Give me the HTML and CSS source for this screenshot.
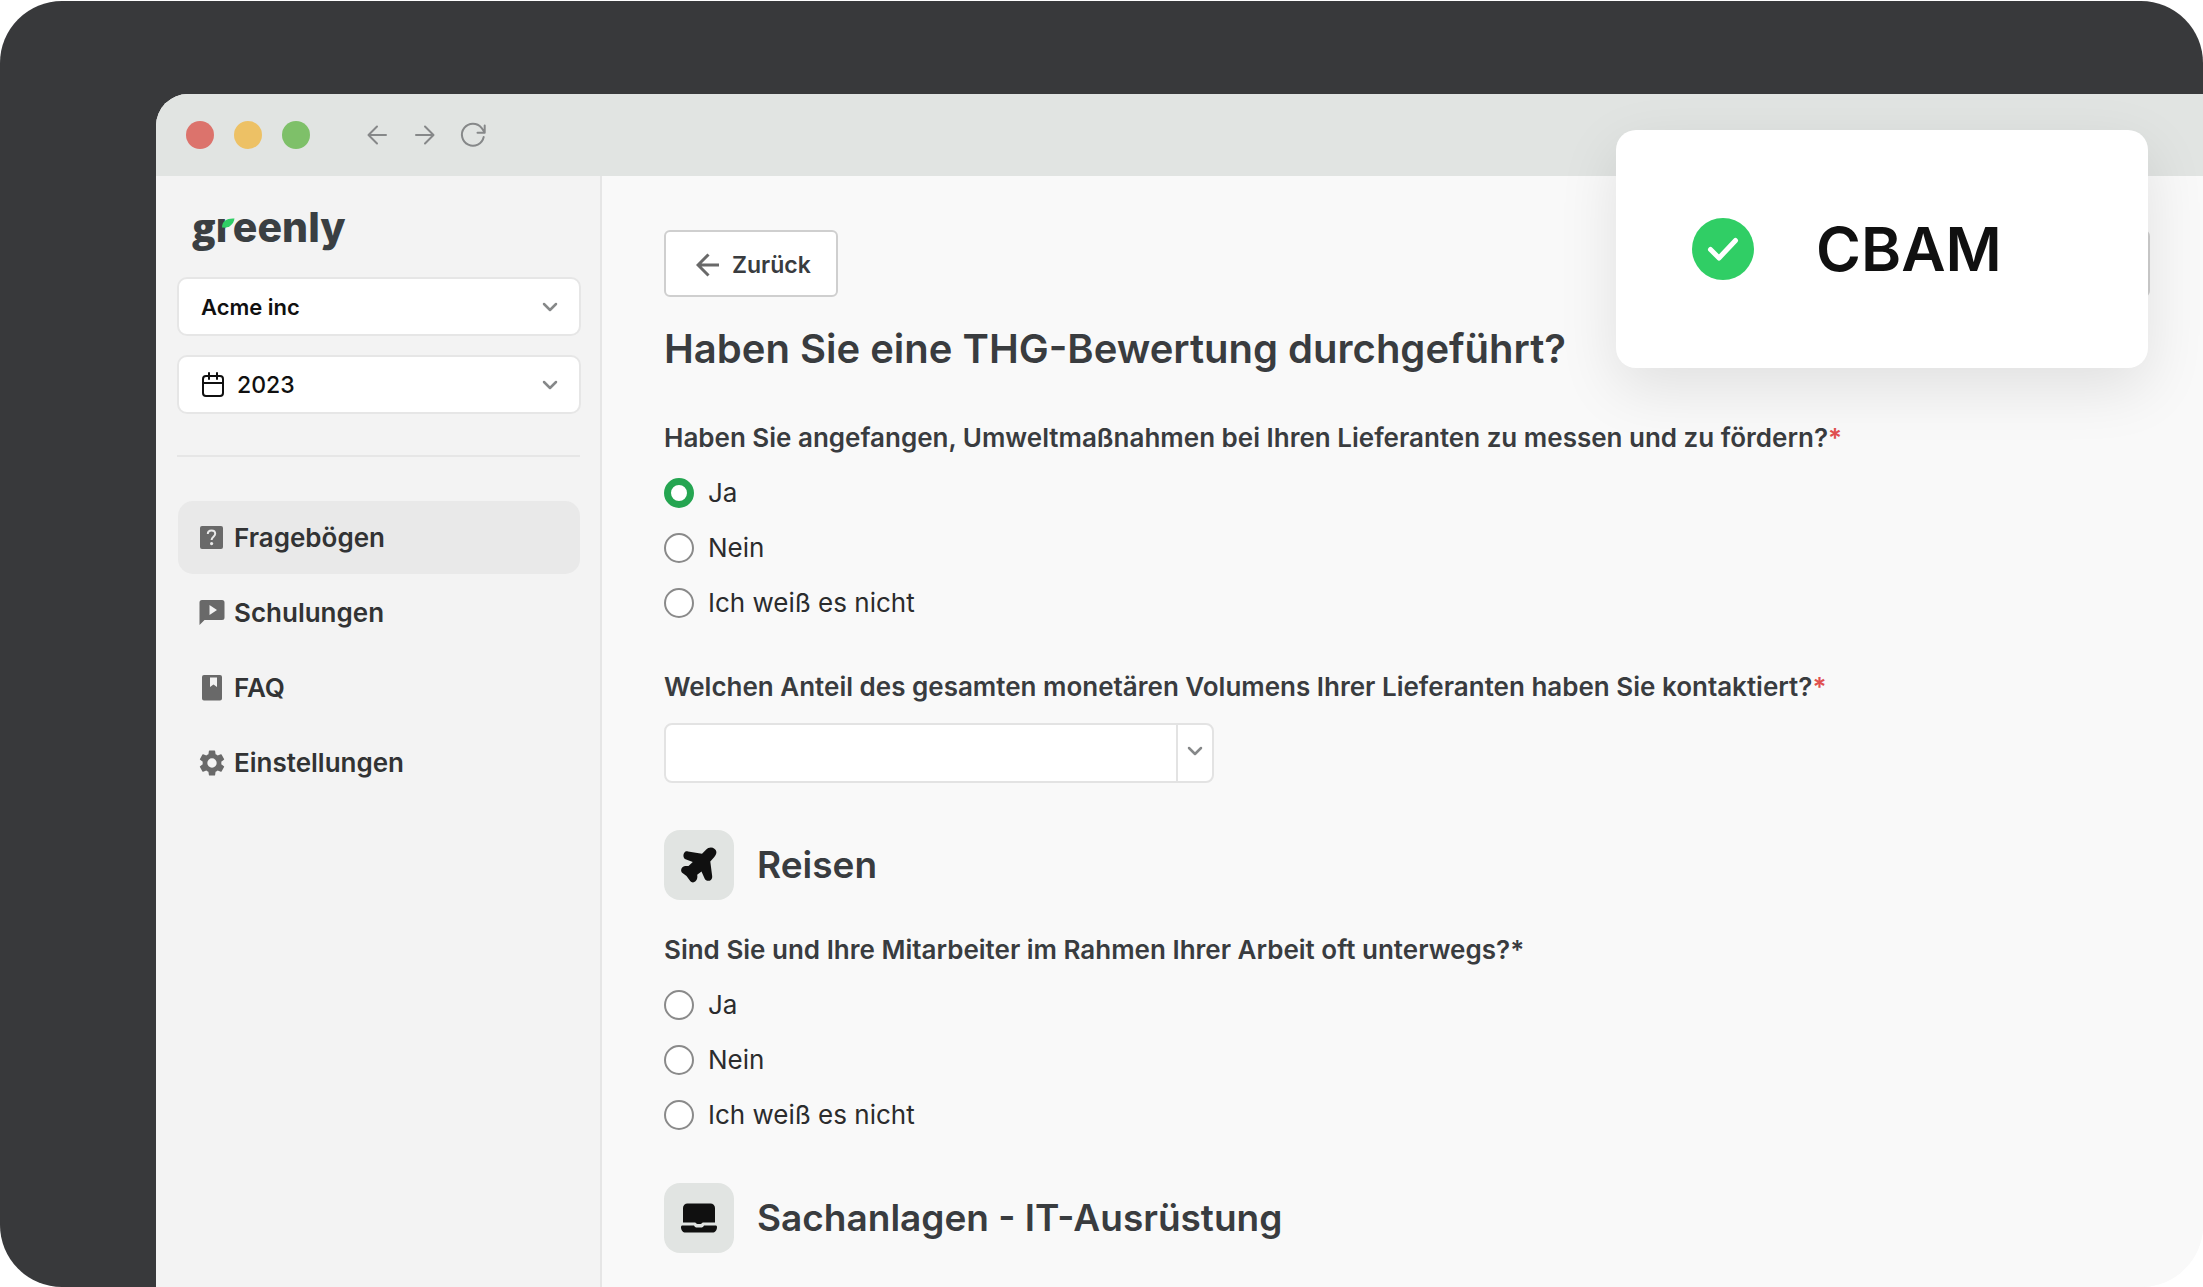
FILE: index.html
```html
<!DOCTYPE html>
<html lang="de">
<head>
<meta charset="utf-8">
<meta name="viewport" content="width=device-width, initial-scale=1">
<title>Greenly – Fragebögen</title>
<link rel="stylesheet" href="styles.css">
</head>
<body>
<div class="stage">
  <div class="window">
    <header class="titlebar">
      <div class="lights">
        <span class="light light-red"></span>
        <span class="light light-yellow"></span>
        <span class="light light-green"></span>
      </div>
      <div class="browser-nav">
        <button class="nav-button" type="button" aria-label="Seite zurück">
          <svg viewBox="0 0 28 28" width="28" height="28"><path d="M23 14H6M14 5.500L5.500 14l8.500 8.500"/></svg>
        </button>
        <button class="nav-button" type="button" aria-label="Seite vor">
          <svg viewBox="0 0 28 28" width="28" height="28"><path d="M5 14h17M14 5.500l8.500 8.500L14 22.500"/></svg>
        </button>
        <button class="nav-button" type="button" aria-label="Neu laden">
          <svg viewBox="0 0 28 28" width="28" height="28"><path d="M24.700 16A11 11 0 1 1 22.500 6.800L25 10.500M25.700 4.500v7.200h-7.200"/></svg>
        </button>
      </div>
    </header>

    <div class="body">
      <aside class="sidebar">
        <a class="logo" href="#" aria-label="greenly"><span class="logo-g">g</span><span class="logo-r"><span class="logo-stem">r</span><svg class="leaf" viewBox="0 0 13 10" width="13" height="10"><path d="M0 9.500C0 3 5 0 12.500.500 11.500 6.500 7 10.500 0 9.500z"/></svg></span>eenly</a>

        <div class="pickers">
          <div class="picker">
            <select class="picker-select picker-company" aria-label="Unternehmen"><option>Acme inc</option></select>
            <svg class="chevron" viewBox="0 0 16 10" width="16" height="10"><path d="M2 2l6 6 6-6"/></svg>
          </div>
          <div class="picker">
            <svg class="calendar" viewBox="0 0 24 26" width="24" height="26"><rect x="2" y="4" width="20" height="20" rx="3"/><path d="M2 11h20M8 1v6M16 1v6"/></svg>
            <select class="picker-select picker-year" aria-label="Jahr"><option>2023</option></select>
            <svg class="chevron" viewBox="0 0 16 10" width="16" height="10"><path d="M2 2l6 6 6-6"/></svg>
          </div>
        </div>

        <nav class="menu">
          <a class="menu-item menu-item-active" href="#">
            <svg viewBox="0 0 26 26" width="26" height="26"><rect x="1" y="1" width="23" height="23" rx="2"/><path class="question" d="M8.800 9c0-2.200 1.600-3.600 3.700-3.600s3.700 1.400 3.700 3.400c0 2.800-3.600 3-3.600 6.200"/><circle class="question-dot" cx="12.600" cy="18.600" r="1.600"/></svg>
            Fragebögen
          </a>
          <a class="menu-item" href="#">
            <svg viewBox="0 0 26 26" width="26" height="26"><path fill-rule="evenodd" d="M3 0h20a2.500 2.500 0 0 1 2.500 2.500v15A2.500 2.500 0 0 1 23 20H5.500L.500 25V2.500A2.500 2.500 0 0 1 3 0zM10.500 5v10l7.500-5z"/></svg>
            Schulungen
          </a>
          <a class="menu-item" href="#">
            <svg viewBox="0 0 26 26" width="26" height="26"><path fill-rule="evenodd" d="M5 0h16a2 2 0 0 1 2 2v21.500a2 2 0 0 1-2 2H5a2 2 0 0 1-2-2V2a2 2 0 0 1 2-2zM11 2.500V12l3.500-2.500L18 12V2.500z"/></svg>
            FAQ
          </a>
          <a class="menu-item" href="#">
            <svg viewBox="2 2 20 20" width="26" height="26"><path d="M19.140 12.940c.04-.3.060-.610.060-.940s-.020-.640-.070-.940l2.030-1.580a.49.49 0 0 0 .12-.61l-1.920-3.320a.49.49 0 0 0-.59-.22l-2.390.96a7 7 0 0 0-1.620-.94l-.36-2.540A.48.48 0 0 0 13.920 2.400h-3.840a.48.48 0 0 0-.47.41l-.36 2.540c-.59.240-1.130.570-1.620.940l-2.390-.96a.49.49 0 0 0-.59.22L2.740 8.870a.49.49 0 0 0 .12.61l2.030 1.580c-.05.300-.09.630-.09.940s.02.640.07.940l-2.030 1.580a.49.49 0 0 0-.12.610l1.920 3.320c.12.220.37.290.59.220l2.390-.96c.5.380 1.030.700 1.620.940l.36 2.540c.05.240.24.410.48.410h3.840c.24 0 .44-.17.470-.41l.36-2.540a7 7 0 0 0 1.620-.94l2.390.96c.22.080.47 0 .59-.22l1.920-3.320a.49.49 0 0 0-.12-.61zM12 15.600a3.600 3.600 0 1 1 0-7.200 3.600 3.600 0 0 1 0 7.200z"/></svg>
            Einstellungen
          </a>
        </nav>
      </aside>

      <main class="content">
        <button class="back" type="button">
          <svg viewBox="0 0 24 24" width="24" height="24"><path d="M23 12H2.500M12.500 1.500L2 12l10.500 10.500"/></svg>
          Zurück
        </button>
        <h1 class="title">Haben Sie eine THG-Bewertung durchgeführt?</h1>

        <fieldset class="question-group">
          <legend class="label">Haben Sie angefangen, Umweltmaßnahmen bei Ihren Lieferanten zu messen und zu fördern?<span class="required">*</span></legend>
          <label class="choice"><input class="radio" type="radio" name="suppliers" checked>Ja</label>
          <label class="choice"><input class="radio" type="radio" name="suppliers">Nein</label>
          <label class="choice"><input class="radio" type="radio" name="suppliers">Ich weiß es nicht</label>
        </fieldset>

        <div class="share">
          <label class="label" for="share">Welchen Anteil des gesamten monetären Volumens Ihrer Lieferanten haben Sie kontaktiert?<span class="required">*</span></label>
          <div class="share-field">
            <select class="share-select" id="share"><option></option></select>
            <span class="share-toggle"><svg class="chevron" viewBox="0 0 16 10" width="16" height="10"><path d="M2 2l6 6 6-6"/></svg></span>
          </div>
        </div>

        <h2 class="section">
          <span class="section-icon"><svg viewBox="0 0 36 36" width="36" height="36"><path d="M3.300 5.700C4.200 4.500 5.400 4.100 7 4.400l14 2.300 4-4C27.500.200 31-.200 33.700 1.900s1.900 5.800-.6 8.300l-3.800 4.300 1.800 14c.3 2-.1 3.400-1.200 4.400-1.900 1.700-5.500 1-6.300-1.500L20.500 24.500l-4.300 3.300c.5 2.700-.100 5-1.700 6.500-1.600 1.600-4 1.500-5.500-.5L5.500 29 1.500 26C-.300 24.500-.300 22.100 1.200 20.500c1.500-1.500 3.700-1.700 6.300-1.400L11.800 15 4.500 12.300C2.200 11.400 1.800 7.500 3.300 5.700z"/></svg></span>
          Reisen
        </h2>

        <fieldset class="question-group question-group-travel">
          <legend class="label">Sind Sie und Ihre Mitarbeiter im Rahmen Ihrer Arbeit oft unterwegs?*</legend>
          <label class="choice"><input class="radio" type="radio" name="travel">Ja</label>
          <label class="choice"><input class="radio" type="radio" name="travel">Nein</label>
          <label class="choice"><input class="radio" type="radio" name="travel">Ich weiß es nicht</label>
        </fieldset>

        <h2 class="section section-equipment">
          <span class="section-icon"><svg viewBox="0 0 36 30" width="36" height="30"><path d="M6.500.500h23a4.500 4.500 0 0 1 4.500 4.500v14.500H22c-1 0-1.200 1.500-2.500 1.500h-3c-1.300 0-1.500-1.500-2.500-1.500H2V5A4.500 4.500 0 0 1 6.500.500z"/><path d="M1.500 22.500H13c.8 1.500 1.500 2 3 2h4c1.500 0 2.200-.5 3-2h11.500c1 0 1.500.700 1.500 1.500 0 3.500-2 5.500-4.500 5.500h-27C2 29.500 0 27.500 0 24c0-.8.500-1.500 1.500-1.500z"/></svg></span>
          Sachanlagen - IT-Ausrüstung
        </h2>
      </main>
    </div>
  </div>

  <div class="behind-card"></div>
  <section class="card">
    <svg class="check" viewBox="0 0 62 62" width="62" height="62"><circle cx="31" cy="31" r="31"/><path d="M18.500 31.500l8.500 8.500L43.500 22.500"/></svg>
    CBAM
  </section>
</div>
</body>
</html>
```

FILE: styles.css
```css
* {
  box-sizing: border-box;
}

body {
  margin: 0;
  padding-top: 1px;
  background: #fff;
  font-family: Inter, "Liberation Sans", sans-serif;
  color: #393c3f;
}

svg {
  display: block;
  flex: none;
}

a {
  color: inherit;
  text-decoration: none;
}

/* The lower right quarter is light, so no dark edge shows round that corner */
.stage {
  position: relative;
  display: flex;
  min-height: calc(100vh - 1px);
  padding: 93px 0 0 156px;
  background:
    linear-gradient(#38393b, #38393b) 0 0 / 50% 100% no-repeat,
    linear-gradient(#38393b 50%, #f9f9f9 50%);
  border-radius: 62px;
  overflow: hidden;
}

.window {
  display: flex;
  flex: 1;
  flex-direction: column;
  background: #f9f9f9;
  border-radius: 32px 0 0 0;
  overflow: hidden;
}

/* Browser chrome */

.titlebar {
  display: flex;
  align-items: center;
  gap: 53px;
  height: 82px;
  padding-left: 30px;
  background: #e1e4e2;
}

.lights,
.browser-nav {
  display: flex;
  gap: 20px;
}

.light {
  width: 28px;
  height: 28px;
  border-radius: 50%;
}

.light-red {
  background: #dc736c;
}

.light-yellow {
  background: #edc165;
}

.light-green {
  background: #7ec069;
}

.nav-button {
  padding: 0;
  background: none;
  border: 0;
}

.nav-button path {
  fill: none;
  stroke: #868889;
  stroke-width: 2;
  stroke-linecap: round;
  stroke-linejoin: round;
}

.body {
  display: flex;
  flex: 1;
}

/* Sidebar */

.sidebar {
  flex: none;
  width: 446px;
  padding: 27px 19px 0 21px;
  background: #f3f3f3;
  border-right: 2px solid #e6e6e6;
}

.logo {
  display: flex;
  width: max-content;
  margin-left: 15px;
  font-size: 41px;
  font-weight: 800;
  line-height: 48px;
  color: #3a3f42;
}

.logo-g {
  font-family: "Open Sans", sans-serif;
  font-size: 39px;
}

.logo-r {
  position: relative;
}

/* Only the stem of the letter shows; the leaf stands in for its arm */
.logo-stem {
  display: block;
  clip-path: inset(0 7px 0 0);
}

.leaf {
  position: absolute;
  top: 15px;
  right: -2px;
  fill: #30ce65;
}

.pickers {
  display: grid;
  gap: 19px;
  margin-right: 1px;
  padding: 26px 0 41px;
  border-bottom: 2px solid #e6e6e6;
}

.picker {
  display: flex;
  align-items: center;
  height: 59px;
  margin-right: -1px;
  padding: 0 21px 0 22px;
  background: #fff;
  border: 2px solid #e6e6e6;
  border-radius: 10px;
}

.picker-select {
  flex: 1;
  padding: 0;
  appearance: none;
  background: none;
  border: 0;
  font: 500 23px/32px Inter, sans-serif;
  color: #101010;
}

.picker-company {
  font-size: 22px;
  font-weight: 600;
}

.picker-year {
  padding-left: 12px;
}

.chevron path {
  fill: none;
  stroke: #868889;
  stroke-width: 2.5;
  stroke-linecap: round;
  stroke-linejoin: round;
}

.calendar {
  fill: none;
  stroke: #101010;
  stroke-width: 2;
  stroke-linecap: round;
}

.menu {
  display: grid;
  gap: 2px;
  margin: 0 1px;
  padding-top: 44px;
}

.menu-item {
  display: flex;
  align-items: center;
  gap: 9px;
  height: 73px;
  padding-left: 21px;
  border-radius: 15px;
  font-size: 26px;
  font-weight: 600;
  line-height: 32px;
  color: #323334;
}

.menu-item-active {
  background: #e9e9e9;
}

.menu-item svg {
  fill: #696969;
}

.menu-item .question {
  fill: none;
  stroke: #e9e9e9;
  stroke-width: 2;
}

.menu-item .question-dot {
  fill: #e9e9e9;
}

/* Questionnaire */

.content {
  flex: 1;
  padding: 54px 62px 24px;
}

.back {
  display: flex;
  align-items: center;
  gap: 12px;
  height: 67px;
  padding: 2px 25px 0 30px;
  background: #fff;
  border: 2px solid #cfcfcf;
  border-radius: 6px;
  font: 600 23px/32px Inter, sans-serif;
  color: #393c3f;
}

.back path {
  fill: none;
  stroke: #696969;
  stroke-width: 3;
}

.title {
  margin: 24px 0 0;
  font-size: 40px;
  font-weight: 600;
  line-height: 56px;
}

.question-group {
  display: grid;
  margin: 45px 0 0;
  padding: 0;
  border: 0;
}

.label {
  display: block;
  padding: 0;
  font-size: 26px;
  font-weight: 600;
  line-height: 32px;
}

.required {
  color: #e0504f;
}

.choice {
  display: flex;
  align-items: center;
  gap: 14px;
  height: 55px;
  font-size: 26px;
  line-height: 32px;
  color: #2b2c2d;
}

.question-group .label {
  margin-bottom: 11px;
}

.radio {
  width: 30px;
  height: 30px;
  margin: 0;
  appearance: none;
  background: #fff;
  border: 2px solid #8a8a8a;
  border-radius: 50%;
}

.radio:checked {
  border: 7px solid #25a551;
}

.share {
  margin-top: 41px;
}

.share-field {
  display: flex;
  width: 550px;
  height: 60px;
  margin-top: 20px;
  background: #fff;
  border: 2px solid #e3e3e3;
  border-radius: 8px;
}

.share-select {
  flex: 1;
  appearance: none;
  background: none;
  border: 0;
}

.share-toggle {
  display: grid;
  place-items: center;
  width: 36px;
  padding-bottom: 4px;
  border-left: 2px solid #e3e3e3;
}

.section {
  display: flex;
  align-items: center;
  gap: 23px;
  margin: 47px 0 0;
  font-size: 37px;
  font-weight: 600;
  line-height: 48px;
}

.section-equipment {
  margin-top: 41px;
}

.section-icon {
  display: grid;
  place-items: center;
  width: 70px;
  height: 70px;
  background: #e1e4e2;
  border-radius: 16px;
  fill: #101010;
}

.question-group-travel {
  margin-top: 34px;
}

/* Floating card */

.card,
.behind-card {
  position: absolute;
  right: 55px;
}

.card {
  top: 129px;
  display: flex;
  align-items: center;
  gap: 62px;
  width: 532px;
  height: 238px;
  padding-left: 76px;
  background: #fff;
  border-radius: 20px;
  box-shadow: 0 20px 60px rgba(0, 0, 0, 0.1);
  font-size: 61px;
  font-weight: 600;
  color: #101010;
}

.behind-card {
  top: 229px;
  width: 120px;
  height: 67px;
  margin-right: -2px;
  background: #fff;
  border: 2px solid #cfcfcf;
  border-radius: 6px;
}

.check circle {
  fill: #30ce65;
}

.check path {
  fill: none;
  stroke: #fff;
  stroke-width: 5;
  stroke-linecap: round;
  stroke-linejoin: round;
}
```
